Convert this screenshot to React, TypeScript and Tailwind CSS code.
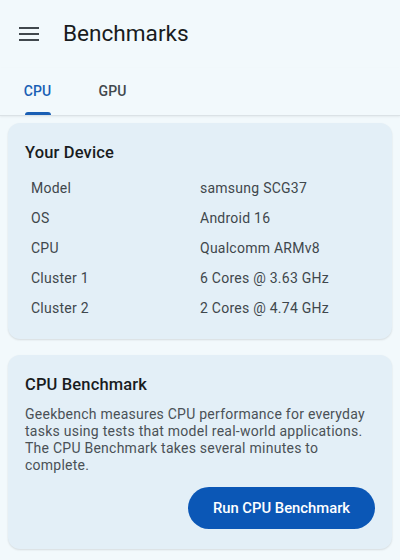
import { useState } from 'react'

const device = [
  { label: 'Model', value: 'samsung SCG37' },
  { label: 'OS', value: 'Android 16' },
  { label: 'CPU', value: 'Qualcomm ARMv8' },
  { label: 'Cluster 1', value: '6 Cores @ 3.63 GHz' },
  { label: 'Cluster 2', value: '2 Cores @ 4.74 GHz' },
]

function MenuIcon() {
  return (
    <svg width="20" height="14" viewBox="0 0 20 14" className="text-[#41484d]">
      <rect x="0" y="0" width="20" height="2" fill="currentColor" />
      <rect x="0" y="6" width="20" height="2" fill="currentColor" />
      <rect x="0" y="12" width="20" height="2" fill="currentColor" />
    </svg>
  )
}

export default function App() {
  const [tab, setTab] = useState<'CPU' | 'GPU'>('CPU')

  return (
    <div className="min-h-[560px] w-[400px] bg-[#f2f9fc] font-['Roboto',sans-serif] text-[#191c1e]">
      <header className="flex h-[68px] items-center pl-[19px]">
        <MenuIcon />
        <h1 className="ml-[24px] text-[22.6px] leading-[28px]">Benchmarks</h1>
      </header>

      <div className="flex h-[48px] border-b border-[#dbe2e6] shadow-[0_1px_2px_rgba(0,0,0,0.06)]">
        {(['CPU', 'GPU'] as const).map((t) => (
          <button
            key={t}
            onClick={() => setTab(t)}
            className={`relative flex w-[75px] items-center justify-center text-[14px] font-medium tracking-[0.1px] ${
              tab === t ? 'text-[#1a5fb4]' : 'text-[#41484d]'
            }`}
          >
            {t}
            {tab === t && (
              <span className="absolute bottom-0 left-1/2 h-[3px] w-[26px] -translate-x-1/2 rounded-t-[3px] bg-[#1a5fb4]" />
            )}
          </button>
        ))}
      </div>

      <main className="flex flex-col gap-4 px-2 pt-[7px]">
        <section className="rounded-xl bg-[#e3eff7] px-[17px] pb-[16px] pt-[18px] shadow-[0_1px_2px_rgba(0,0,0,0.12)]">
          <h2 className="text-[16.5px] font-medium leading-[24px] tracking-[0.15px]">Your Device</h2>
          <div className="mt-[8px] pl-[6px]">
            {device.map((d) => (
              <div
                key={d.label}
                className="flex h-[30px] items-center text-[14px] tracking-[0.25px] text-[#3f474c]"
              >
                <span className="w-[169px]">{d.label}</span>
                <span>{d.value}</span>
              </div>
            ))}
          </div>
        </section>

        <section className="rounded-xl bg-[#e3eff7] px-[17px] pb-[20px] pt-[18px] shadow-[0_1px_2px_rgba(0,0,0,0.12)]">
          <h2 className="text-[16.5px] font-medium leading-[24px] tracking-[0.15px]">CPU Benchmark</h2>
          <p className="mt-[9px] text-[14px] leading-[17px] tracking-[0.25px] text-[#4a5156]">
            Geekbench measures CPU performance for everyday tasks using tests that model real-world
            applications. The CPU Benchmark takes several minutes to complete.
          </p>
          <div className="mt-[13px] flex justify-end">
            <button className="h-[42px] w-[187px] rounded-full bg-[#0b57b6] text-[14.8px] font-medium text-white">
              Run CPU Benchmark
            </button>
          </div>
        </section>
      </main>
    </div>
  )
}
